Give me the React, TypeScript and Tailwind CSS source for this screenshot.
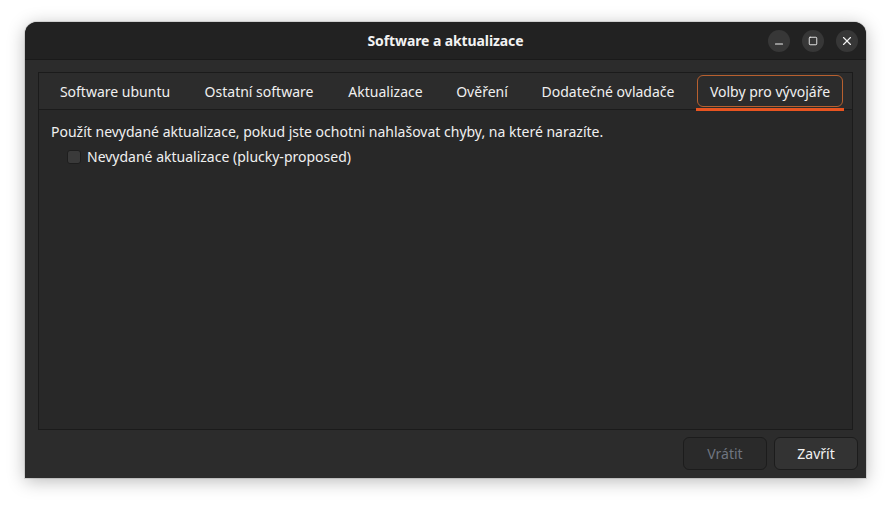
import { Minus, Square, X } from 'lucide-react';

const tabs = [
    { label: 'Software ubuntu', w: 'w-[144px]' },
    { label: 'Ostatní software', w: 'w-[144px]' },
    { label: 'Aktualizace', w: 'w-[109px]' },
    { label: 'Ověření', w: 'w-[84px]' },
    { label: 'Dodatečné ovladače', w: 'w-[168px]' },
    { label: 'Volby pro vývojáře', w: 'w-[156px]', active: true },
];

function WinButton({ children }: { children: React.ReactNode }) {
    return (
        <div className="w-[22px] h-[22px] rounded-full bg-[#373737] flex items-center justify-center text-[#f0f0f0]">
            {children}
        </div>
    );
}

export default function App() {
    return (
        <div
            className="w-[891px] h-[506px] bg-white pt-[22px] pl-[25px]"
            style={{ fontFamily: '"Noto Sans", "DejaVu Sans", sans-serif' }}
        >
            <div className="w-[841px] h-[456px] rounded-t-[12px] bg-[#2c2c2c] flex flex-col shadow-[0_3px_18px_rgba(0,0,0,0.28),0_0_0_1px_rgba(0,0,0,0.1)] overflow-hidden">
                {/* header bar */}
                <div className="h-[38px] bg-[#222222] border-b border-[#1a1a1a] flex items-center relative">
                    <div className="flex-1 text-center text-[14px] font-bold tracking-[-0.1px] text-[#f2f2f2]">Software a aktualizace</div>
                    <div className="absolute right-[8px] top-[8px] flex gap-[12px]">
                        <WinButton>
                            <Minus size={12} strokeWidth={2.2} className="mt-[5px]" />
                        </WinButton>
                        <WinButton>
                            <Square size={10} strokeWidth={2.2} />
                        </WinButton>
                        <WinButton>
                            <X size={14} strokeWidth={2} />
                        </WinButton>
                    </div>
                </div>

                {/* body */}
                <div className="flex-1 flex flex-col px-[13px] pt-[12px]">
                    <div className="w-[815px] h-[358px] border border-[#1b1b1b] flex flex-col">
                        <div className="h-[37px] border-b border-[#1b1b1b] flex pl-[4px] text-[14px] text-[#f0f0f0]">
                            {tabs.map((t) => (
                                <div key={t.label} className={`${t.w} relative flex items-center justify-center`}>
                                    {t.active && (
                                        <>
                                            <div className="absolute left-[5px] right-[5px] top-[2px] bottom-[2px] border border-[#b8602f] rounded-[6px]" />
                                            <div className="absolute left-[4px] right-[4px] bottom-[-2px] h-[3px] bg-[#e95420]" />
                                        </>
                                    )}
                                    <span className="relative">{t.label}</span>
                                </div>
                            ))}
                        </div>
                        <div className="flex-1 bg-[#282828] px-[12px] pt-[11px] text-[14px] text-[#f0f0f0]">
                            <div>Použít nevydané aktualizace, pokud jste ochotni nahlašovat chyby, na které narazíte.</div>
                            <div className="flex items-center gap-[6px] pl-[16px] mt-[4px]">
                                <div className="w-[14px] h-[14px] rounded-[3px] bg-[#3a3a3a] border border-[#1e1e1e]" />
                                <span>Nevydané aktualizace (plucky-proposed)</span>
                            </div>
                        </div>
                    </div>
                    <div className="flex justify-end gap-[7px] mt-[7px] mr-[-5px]">
                        <button className="w-[84px] h-[33px] rounded-[6px] border border-[#1c1c1c] bg-[#2a2a2a] text-[14px] text-[#6f7580]">
                            Vrátit
                        </button>
                        <button className="w-[84px] h-[33px] rounded-[6px] border border-[#1c1c1c] bg-[#333333] text-[14px] text-[#f2f2f2]">
                            Zavřít
                        </button>
                    </div>
                </div>
            </div>
        </div>
    );
}
